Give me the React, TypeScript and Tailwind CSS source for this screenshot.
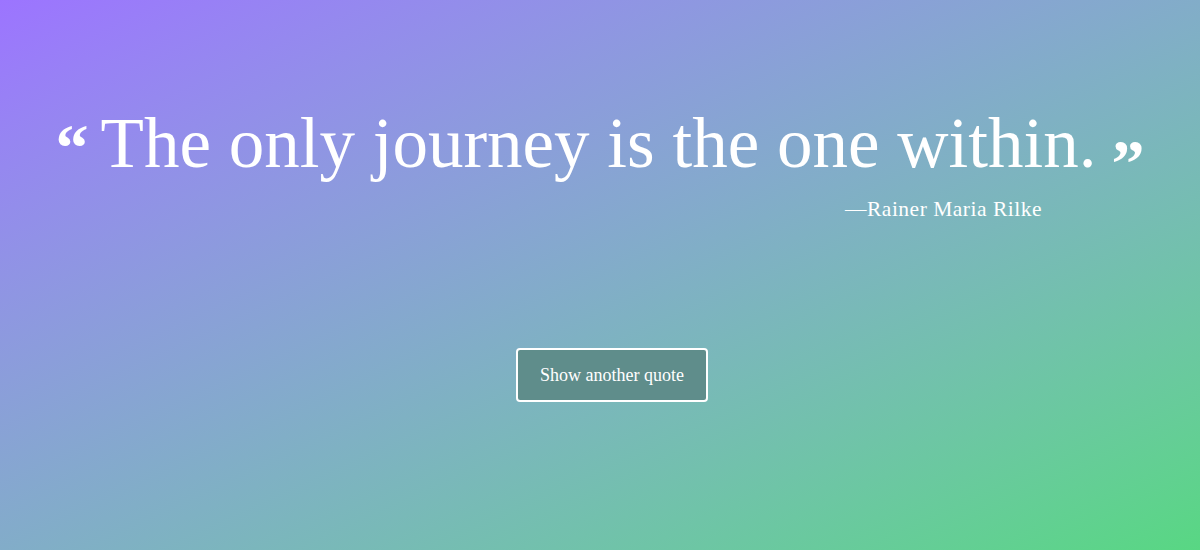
import React from 'react';

const quote = {
  text: 'The only journey is the one within.',
  author: 'Rainer Maria Rilke',
};

export default function App() {
  return (
    <main className="h-[550px] w-full bg-gradient-to-br from-[#9c74ff] to-[#58d783] font-['Liberation_Serif',serif] text-white">
      <div className="flex flex-col items-center pt-[108px]">
        <div className="flex items-start justify-center">
          <span className="mr-[12px] mt-[7px] text-[66px] font-bold leading-none">“</span>
          <h1 className="text-[71px] font-normal leading-none">{quote.text}</h1>
          <span className="ml-[15px] mt-[22px] text-[66px] font-bold leading-none">”</span>
        </div>
        <div className="-mt-[3px] flex w-full justify-end pr-[158px]">
          <p className="text-[21.5px] tracking-[0.5px]">—{quote.author}</p>
        </div>
        <button className="ml-[24px] mt-[123px] h-[54px] w-[192px] rounded-[4px] border-2 border-white bg-[#5f8d8b] text-[18px] text-white">
          Show another quote
        </button>
      </div>
    </main>
  );
}
